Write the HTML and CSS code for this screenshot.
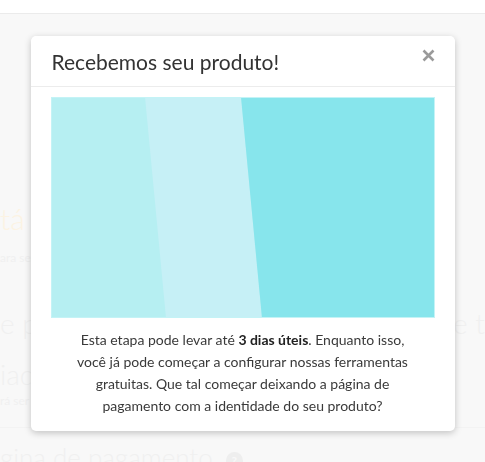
FILE: index.html
```html
<!DOCTYPE html>
<html>
  <head>
    <meta charset="utf-8">
    <link rel="stylesheet" href="styles.css">
    <title>Recebemos seu produto</title>
  </head>
  <body>
    <header class="topbar"></header>

    <main class="page">
      <h2 class="page-title">tá quase lá</h2>
      <p class="page-sub">ara ser aprovado</p>
      <div class="page-row">
        <h3 class="page-step">e produto</h3>
        <h3 class="page-step">e testar</h3>
      </div>
      <h3 class="page-step tight">iados</h3>
      <p class="page-sub under">rá ser</p>
      <hr class="page-rule">
      <h3 class="page-step last">gina de pagamento <span class="help">?</span></h3>
    </main>

    <!-- janela modal sobre a página -->
    <div class="backdrop">
      <div class="modal">
        <div class="modal-header">
          <h4 class="modal-title">Recebemos seu produto!</h4>
          <button class="modal-close" aria-label="Fechar">
            <svg width="13" height="13" viewBox="0 0 13 13">
              <path d="M1.5 1.5 L11.5 11.5 M11.5 1.5 L1.5 11.5" stroke="#9a9a9a" stroke-width="2.6"/>
            </svg>
          </button>
        </div>
        <div class="modal-body">
          <svg class="illustration" width="384" height="221" viewBox="0 0 384 221">
            <rect x="0" y="0" width="384" height="221" fill="#b6eff2"/>
            <polygon points="94,0 190,0 211,221 115,221" fill="#c6f0f6"/>
            <polygon points="190,0 384,0 384,221 211,221" fill="#87e5ec"/>
            <rect x="0.5" y="0.5" width="383" height="220" fill="none" stroke="#c4f3f6" stroke-width="1"/>
          </svg>
          <p class="modal-text">Esta etapa pode levar até <strong>3 dias úteis</strong>. Enquanto isso, você já pode começar a configurar nossas ferramentas gratuitas. Que tal começar deixando a página de pagamento com a identidade do seu produto?</p>
        </div>
      </div>
    </div>
  </body>
</html>
```

FILE: styles.css
```css
body {
  margin: 0;
  padding: 0;
  background-color: #f8f8f8;
  font-family: "Lato", "Noto Sans", sans-serif;
  color: #333;
  overflow: hidden;
  height: 462px;
}

.topbar {
  height: 13px;
  background-color: #fff;
  border-bottom: 1px solid #ebebeb;
}

.page {
  padding-top: 186px;
  color: #f0f0f0;
  white-space: nowrap;
}

.page-title {
  margin: 0;
  font-size: 30px;
  font-weight: 300;
  color: #fcf3e3;
  line-height: 36px;
}

.page-sub {
  margin: 14px 0 0;
  font-size: 12px;
  line-height: 16px;
  color: #f0f0f0;
}

.page-sub.under {
  margin-top: 3px;
}

.page-row {
  display: grid;
  grid-template-columns: 453px auto;
  margin-top: 39px;
}

.page-step {
  margin: 0;
  font-size: 28px;
  font-weight: 300;
  line-height: 36px;
}

.page-step.tight {
  margin-top: 17px;
  line-height: 32px;
}

.page-step.last {
  margin-top: 11px;
  font-size: 26px;
}

.page-rule {
  border: none;
  border-top: 1px solid #f3f3f3;
  margin: 18px 0 0;
}

.help {
  display: inline-block;
  width: 17px;
  height: 17px;
  margin-left: 6px;
  border-radius: 50%;
  background-color: #eeeeee;
  color: #f8f8f8;
  font-size: 12px;
  font-weight: 700;
  line-height: 17px;
  text-align: center;
  vertical-align: 2px;
}

.backdrop {
  position: fixed;
  top: 0;
  left: 0;
  right: 0;
  bottom: 0;
  display: flex;
  justify-content: center;
  align-items: flex-start;
  padding-top: 36px;
}

.modal {
  width: 424px;
  background-color: #fff;
  border-radius: 5px;
  box-shadow: 0 2px 7px rgba(0, 0, 0, 0.22);
}

.modal-header {
  display: flex;
  align-items: flex-start;
  justify-content: space-between;
  height: 50px;
  padding: 0 20px 0 21px;
  border-bottom: 1px solid #ececec;
}

.modal-title {
  margin: 13px 0 0;
  font-size: 21px;
  font-weight: 400;
  line-height: 26px;
  color: #333;
}

.modal-close {
  margin-top: 13px;
  padding: 0;
  border: none;
  background: none;
  width: 13px;
  height: 13px;
}

.modal-close svg {
  display: block;
}

.modal-body {
  padding: 10px 20px 14px;
}

.illustration {
  display: block;
}

.modal-text {
  margin: 11px 0 0;
  font-size: 14px;
  line-height: 22px;
  text-align: center;
  color: #3a3a3a;
  padding: 0 20px;
}

.modal-text strong {
  font-weight: 700;
  color: #222;
}
```
